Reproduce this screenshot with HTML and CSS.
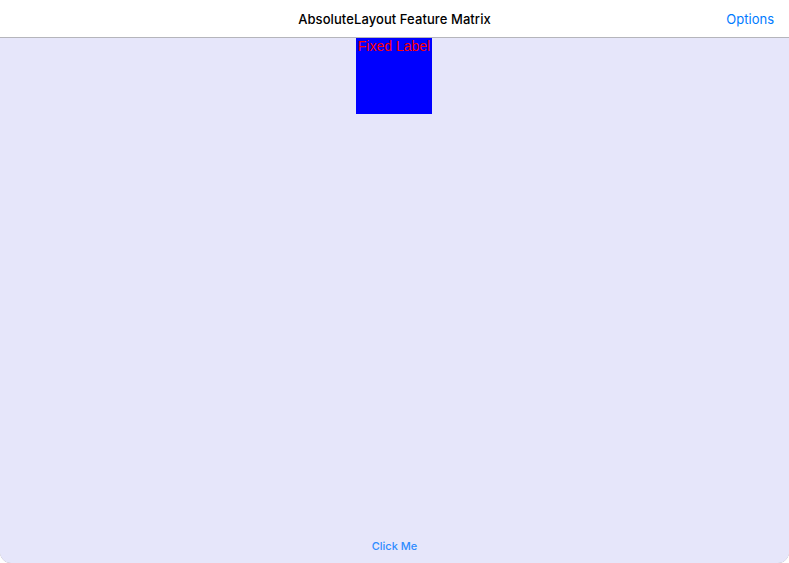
FILE: index.html
```
<!DOCTYPE html>
<html>
<head>
<meta charset="utf-8">
<link rel="stylesheet" href="styles.css">
</head>
<body>
<div class="window">
  <header class="navbar">
    <div class="title">AbsoluteLayout Feature Matrix</div>
    <a class="options">Options</a>
  </header>
  <main class="content">
    <div class="canvas">
      <div class="fixed-box"><span class="fixed-label">Fixed Label</span></div>
    </div>
    <div class="footer">
      <button class="click-btn">Click Me</button>
    </div>
  </main>
</div>
</body>
</html>
```
FILE: styles.css
```
html, body {
  margin: 0;
  padding: 0;
  height: 100%;
  background: #ffffff;
}
body {
  font-family: Inter, "Liberation Sans", sans-serif;
}
.window {
  width: 789px;
  height: 563px;
  display: flex;
  flex-direction: column;
  border-radius: 0 0 11px 11px;
  overflow: hidden;
  box-shadow: inset 0 -1px 0 #9a9a9a;
}
.navbar {
  height: 37px;
  flex: 0 0 37px;
  background: #ffffff;
  border-bottom: 1px solid #b5b5bb;
  position: relative;
  display: flex;
  align-items: center;
  justify-content: center;
}
.title {
  font-size: 13px;
  font-weight: 500;
  color: #000;
  letter-spacing: 0.08px;
}
.options {
  position: absolute;
  right: 15px;
  top: 11px;
  font-size: 13px;
  color: #007aff;
}
.content {
  flex: 1;
  background: #e6e6fa;
  display: flex;
  flex-direction: column;
}
.canvas {
  flex: 1;
  position: relative;
}
.fixed-box {
  position: absolute;
  left: 356px;
  top: 0;
  width: 76px;
  height: 76px;
  background: #0000ff;
  text-align: center;
}
.fixed-label {
  display: block;
  color: #ff0000;
  font-family: "Liberation Sans", sans-serif;
  font-size: 14px;
  line-height: 16px;
}
.footer {
  height: 32px;
  display: flex;
  justify-content: center;
  align-items: flex-start;
}
.click-btn {
  border: none;
  background: none;
  padding: 0;
  font-family: Inter, "Liberation Sans", sans-serif;
  font-size: 11px;
  font-weight: 500;
  color: #2f8cff;
  margin-top: 8px;
}
```
